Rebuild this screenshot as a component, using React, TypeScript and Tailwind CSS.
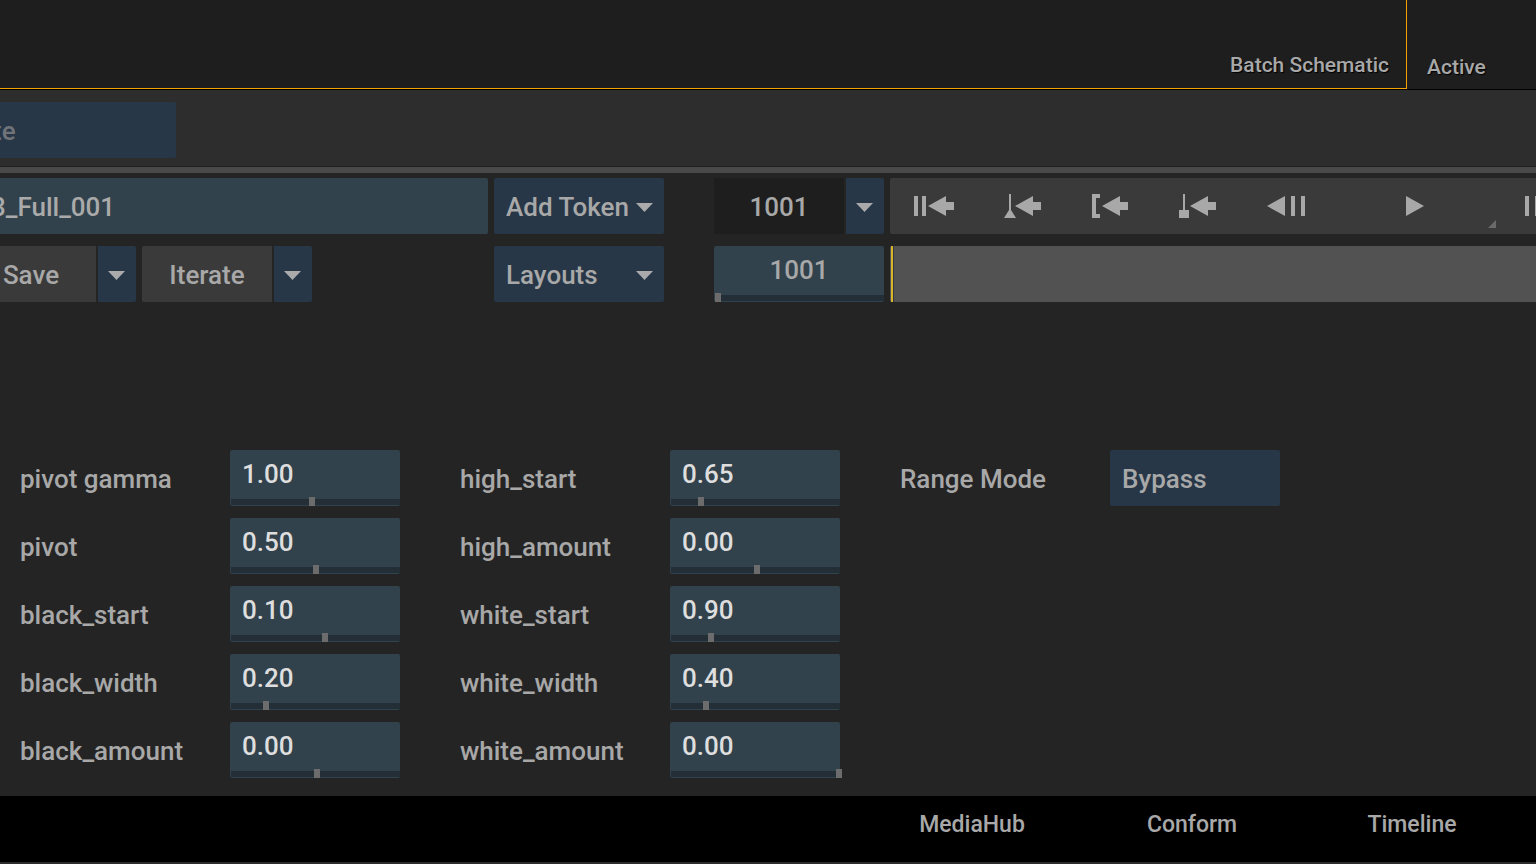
import { useState, type ReactNode } from 'react';

type Param = {
    name: string;
    value: string;
    pos: number;
};

// slider positions run from 0 to SLIDER_MAX
const SLIDER_MAX = 165;

const lowParams: Param[] = [
    { name: 'pivot gamma', value: '1.00', pos: 78 },
    { name: 'pivot', value: '0.50', pos: 82 },
    { name: 'black_start', value: '0.10', pos: 91 },
    { name: 'black_width', value: '0.20', pos: 32 },
    { name: 'black_amount', value: '0.00', pos: 83 },
];

const highParams: Param[] = [
    { name: 'high_start', value: '0.65', pos: 27 },
    { name: 'high_amount', value: '0.00', pos: 83 },
    { name: 'white_start', value: '0.90', pos: 37 },
    { name: 'white_width', value: '0.40', pos: 32 },
    { name: 'white_amount', value: '0.00', pos: 165 },
];

const transport = [
    { label: 'Go to start', d: 'M2 2h4v20h-4z M10 2h4v20h-4z M16 12L34 2v6h8v8h-8v6z' },
    { label: 'Previous cue mark', d: 'M9 0h2v16l5 8H4l5-8z M15 12L33 2v6h8v8h-8v6z' },
    { label: 'Go to in point', d: 'M4 0h8v4H8v16h4v4H4z M14 12L32 2v6h8v8h-8v6z' },
    { label: 'Previous keyframe', d: 'M7 0h2v16h4v8H3v-8h4z M14 12L32 2v6h8v8h-8v6z' },
    { label: 'Step back', d: 'M3 12L21 2v20z M27 2h4v20h-4z M37 2h4v20h-4z' },
];

function Icon({ d }: { d: string }) {
    return (
        <svg viewBox="0 0 44 24" className="w-11 h-6 shrink-0 fill-[#a8a8a8]" aria-hidden="true">
            <path d={d} />
        </svg>
    );
}

function Caret() {
    return (
        <svg viewBox="0 0 18 9" className="w-[18px] h-[9px] fill-[#aaaaaa]" aria-hidden="true">
            <path d="M0 0h17L8.5 9z" />
        </svg>
    );
}

function CaretButton({ label }: { label: string }) {
    return (
        <button aria-label={label} className="flex items-center justify-center w-[38px] h-14 pt-[3px] rounded-r-xs bg-[#273747]">
            <Caret />
        </button>
    );
}

function Dropdown({ id, label, value, caret = true }: { id?: string; label?: string; value: string; caret?: boolean }) {
    return (
        <div className="relative w-[170px] shrink-0">
            <select id={id} aria-label={label} className="appearance-none w-full h-14 pl-3 pt-0.5 rounded-xs bg-[#273747] outline-none">
                <option>{value}</option>
            </select>
            {caret && (
                <span className="absolute right-2.5 top-[25px] pointer-events-none">
                    <Caret />
                </span>
            )}
        </div>
    );
}

function SliderField({ id, label, value, pos, className = 'pl-3 text-[#dedede]' }: { id?: string; label: string; value: string; pos: number; className?: string }) {
    const [text, setText] = useState(value);
    const [slider, setSlider] = useState(pos);

    return (
        <div className="relative w-[170px] h-14 shrink-0 rounded-xs bg-[#32424c]">
            <input
                id={id}
                aria-label={label}
                value={text}
                onChange={(e) => setText(e.target.value)}
                className={`block w-full h-[49px] pb-0.5 bg-transparent outline-none ${className}`}
            />
            <div className="ml-px h-1.5 bg-[#232e36]" />
            <input
                type="range"
                aria-label={`${label} slider`}
                min={0}
                max={SLIDER_MAX}
                value={slider}
                onChange={(e) => setSlider(Number(e.target.value))}
                className="absolute left-px bottom-0 w-[171px] h-[9px] appearance-none bg-transparent outline-none [&::-webkit-slider-thumb]:appearance-none [&::-webkit-slider-thumb]:w-1.5 [&::-webkit-slider-thumb]:h-[9px] [&::-webkit-slider-thumb]:bg-[#6c6c6c]"
            />
        </div>
    );
}

function ParamRow({ id, name, children }: { id: string; name: string; children: ReactNode }) {
    return (
        <div className="flex items-center w-[380px]">
            <label htmlFor={id} className="w-[210px] pt-0.5">{name}</label>
            {children}
        </div>
    );
}

function ParamColumn({ params }: { params: Param[] }) {
    return (
        <div className="flex flex-col gap-3">
            {params.map((p) => (
                <ParamRow key={p.name} id={p.name} name={p.name}>
                    <SliderField id={p.name} label={p.name} value={p.value} pos={p.pos} />
                </ParamRow>
            ))}
        </div>
    );
}

export default function App() {
    return (
        <div className="flex flex-col min-h-screen overflow-hidden bg-[#242424] text-[#a8a8a8] font-medium text-[26px] leading-8 font-[Roboto,sans-serif]">
            {/* Viewport labels */}
            <header className="flex h-[90px] bg-[#1e1e1e] border-b border-black text-[21px] leading-7 [text-shadow:1px_1px_1px_#000]">
                <div className="flex flex-1 items-end justify-end pr-[17px] pb-[9px] border-r border-b border-[#f5a302]">Batch Schematic</div>
                <div className="flex items-end w-[129px] pl-5 pb-2">Active</div>
            </header>

            <div className="h-[77px] pt-3 bg-[#2d2d2d] border-b border-[#202020]">
                <button className="block w-[188px] h-14 -ml-3 pl-[5px] pt-0.5 rounded-xs bg-[#273747] text-left text-[#707478]">te</button>
            </div>
            <div className="h-1.5 bg-[#494949]" />

            {/* Toolbar */}
            <div className="flex flex-col gap-3 pt-[5px] -ml-[34px]">
                <div className="flex gap-1.5">
                    <input
                        aria-label="Name"
                        defaultValue="3_Full_001"
                        className="w-[522px] h-14 pl-[25px] pt-0.5 rounded-xs bg-[#32424c] text-[#aaaaaa] outline-none"
                    />
                    <Dropdown label="Add Token" value="Add Token" />
                    <div className="flex gap-0.5 w-[170px] ml-11 shrink-0">
                        <input aria-label="Current frame" defaultValue="1001" className="w-[130px] h-14 pt-0.5 rounded-l-xs bg-[#1e1e1e] text-center outline-none" />
                        <CaretButton label="Frame display" />
                    </div>
                    <div className="flex flex-1 min-w-0 h-14 overflow-hidden rounded-l-xs bg-[#3a3a3a]">
                        {transport.map((t) => (
                            <button key={t.label} aria-label={t.label} className="flex items-center justify-center w-[88px] shrink-0">
                                <Icon d={t.d} />
                            </button>
                        ))}
                        <button aria-label="Play" className="relative flex items-center justify-center w-[170px] shrink-0">
                            <Icon d="M13 2v20l18-10z" />
                            <svg viewBox="0 0 8 8" className="absolute right-1 bottom-1.5 size-2 fill-[#6a6a6a]" aria-hidden="true">
                                <path d="M8 0v8H0z" />
                            </svg>
                        </button>
                        <button aria-label="Step forward" className="flex items-center justify-center w-[88px] shrink-0">
                            <Icon d="M3 2h4v20h-4z M13 2h4v20h-4z M23 2v20l18-10z" />
                        </button>
                    </div>
                </div>

                <div className="flex gap-1.5">
                    <div className="flex gap-1.5 w-[522px] shrink-0">
                        <div className="flex gap-0.5">
                            <button className="w-[130px] h-14 pt-0.5 rounded-l-xs bg-[#3a3a3a]">Save</button>
                            <CaretButton label="Save options" />
                        </div>
                        <div className="flex gap-0.5">
                            <button className="w-[130px] h-14 pt-0.5 rounded-l-xs bg-[#3a3a3a]">Iterate</button>
                            <CaretButton label="Iterate options" />
                        </div>
                    </div>
                    <Dropdown label="Layouts" value="Layouts" />
                    <div className="ml-11">
                        <SliderField label="Frame" value="1001" pos={0} className="text-center" />
                    </div>
                    <div className="flex-1 h-14 pl-px rounded-l-xs bg-[#525252]">
                        <div className="w-[3px] h-full bg-[#d8b62c] border-r border-[#33363c]" />
                    </div>
                </div>
            </div>

            {/* Parameters */}
            <main className="flex flex-1 items-start gap-[60px] pt-[148px] pl-5 pb-[18px]">
                <ParamColumn params={lowParams} />
                <ParamColumn params={highParams} />
                <ParamRow id="range-mode" name="Range Mode">
                    <Dropdown id="range-mode" value="Bypass" caret={false} />
                </ParamRow>
            </main>

            <nav className="flex justify-end h-[68px] pr-3.5 pb-2 bg-black border-b-2 border-[#2b2b2b] text-[23px]">
                {['MediaHub', 'Conform', 'Timeline'].map((tab) => (
                    <button key={tab} className="w-[220px]">{tab}</button>
                ))}
            </nav>
        </div>
    );
}
